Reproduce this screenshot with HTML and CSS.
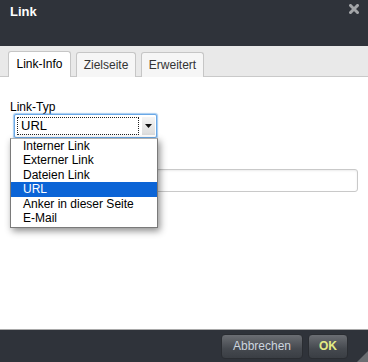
FILE: index.html
```html
<!DOCTYPE html>
<html lang="de">
<head>
<meta charset="utf-8">
<title>Link</title>
<link rel="stylesheet" href="styles.css">
</head>
<body>
<div class="dialog">
  <div class="header">
    <span class="title">Link</span>
    <span class="close" aria-label="Schließen">
      <svg width="10" height="10" viewBox="0 0 10 10"><path d="M1.5 1.5 L8.5 8.5 M8.5 1.5 L1.5 8.5" stroke="#a3a5a8" stroke-width="3" stroke-linecap="square"/></svg>
    </span>
  </div>
  <div class="tabs">
    <span class="tab active">Link-Info</span>
    <span class="tab tab-ziel">Zielseite</span>
    <span class="tab">Erweitert</span>
  </div>
  <div class="content">
    <label class="label">Link-Typ</label>
    <div class="select-wrap">
      <div class="select">
        <span class="select-value"><span class="focus-ring">URL</span></span>
        <span class="select-arrow"><svg width="7" height="4" viewBox="0 0 7 4"><path d="M0 0 H7 L3.5 4 Z" fill="#111"/></svg></span>
      </div>
      <ul class="options">
        <li>Interner Link</li>
        <li>Externer Link</li>
        <li>Dateien Link</li>
        <li class="selected">URL</li>
        <li>Anker in dieser Seite</li>
        <li>E-Mail</li>
      </ul>
    </div>
    <div class="input"></div>
  </div>
  <div class="footer">
    <span class="btn">Abbrechen</span>
    <span class="btn ok">OK</span>
    <span class="grip"></span>
  </div>
</div>
</body>
</html>
```

FILE: styles.css
```css
* { box-sizing: border-box; }
html, body { margin: 0; padding: 0; }
body {
  font-family: "Liberation Sans", Arial, Helvetica, sans-serif;
  font-size: 12px;
  color: #000;
  background: #fff;
}
.dialog {
  width: 368px;
  height: 362px;
  display: flex;
  flex-direction: column;
  position: relative;
  overflow: hidden;
}
.header {
  height: 46px;
  background: #2f333a;
  display: flex;
  justify-content: space-between;
  align-items: flex-start;
  padding: 4px 9px 0 10px;
}
.title {
  color: #fff;
  font-weight: bold;
  font-size: 13px;
  line-height: 15px;
}
.close {
  display: flex;
}
.tabs {
  height: 31px;
  background: #e9e9e9;
  border-bottom: 1px solid #c9c9c9;
  display: flex;
  align-items: flex-end;
  gap: 5px;
  padding-left: 8px;
}
.tab {
  width: 63px;
  height: 25px;
  border: 1px solid #c6c6c6;
  border-bottom: none;
  border-radius: 3px 3px 0 0;
  background: #f6f6f6;
  color: #333;
  line-height: 24px;
  text-align: center;
  margin-bottom: -1px;
}
.tab-ziel { width: 60px; }
.tab.active {
  background: #fff;
  color: #000;
  height: 26px;
}
.content {
  flex: 1;
  padding: 23px 10px 0;
  display: flex;
  flex-direction: column;
  align-items: flex-start;
}
.label {
  line-height: 14px;
  height: 14px;
}
.select-wrap {
  position: relative;
  margin-left: 4px;
  width: 143px;
}
.select {
  height: 24px;
  border: 1px solid #6aa8e6;
  box-shadow: 0 0 1px 1px rgba(90, 160, 230, 0.55);
  border-radius: 2px;
  background: #fff;
  display: flex;
  align-items: stretch;
  padding: 2px 1px 2px 2px;
}
.select-value {
  flex: 1;
  display: flex;
}
.focus-ring {
  flex: 1;
  border: 1px dotted #222;
  padding-left: 3px;
  font-size: 13px;
  line-height: 16px;
}
.select-arrow {
  width: 13px;
  margin-left: 3px;
  background: linear-gradient(#f4f4f4, #dcdcdc);
  display: flex;
  align-items: center;
  justify-content: center;
}
.options {
  position: absolute;
  top: 24px;
  left: -4px;
  width: 148px;
  margin: 0;
  padding: 0 0 2px;
  list-style: none;
  background: #fff;
  border: 1px solid #7a7a7a;
  border-top-color: #b0b0b0;
  box-shadow: 2px 3px 7px rgba(0, 0, 0, 0.45);
  z-index: 2;
}
.options li {
  height: 14.4px;
  line-height: 14.4px;
  padding-left: 12px;
  font-size: 12px;
  color: #000;
}
.options li.selected {
  background: #0b64d6;
  color: #fff;
}
.input {
  margin-top: 31px;
  width: 348px;
  height: 23px;
  border: 1px solid #c9c9c9;
  border-radius: 3px;
  box-shadow: inset 0 1px 2px rgba(0, 0, 0, 0.08);
  background: #fff;
}
.footer {
  height: 33px;
  background: #2f333a;
  border-top: 1px solid #a9a9a9;
  display: flex;
  justify-content: flex-end;
  align-items: flex-start;
  gap: 5px;
  padding: 4px 20px 0 0;
  position: relative;
}
.btn {
  height: 25px;
  line-height: 23px;
  padding: 0 10px;
  border-radius: 4px;
  background: linear-gradient(#6b6e73, #45494f 60%, #3a3e44);
  border: 1px solid #2a2d32;
  color: #cdd5df;
  font-size: 12px;
  text-align: center;
}
.btn:first-child { width: 82px; }
.btn.ok {
  width: 40px;
  color: #e3ec84;
  font-weight: bold;
  padding: 0;
}
.grip {
  position: absolute;
  right: 0;
  bottom: 0;
  width: 0;
  height: 0;
  border-style: solid;
  border-width: 0 0 11px 11px;
  border-color: transparent transparent #6a6d71 transparent;
}
```
